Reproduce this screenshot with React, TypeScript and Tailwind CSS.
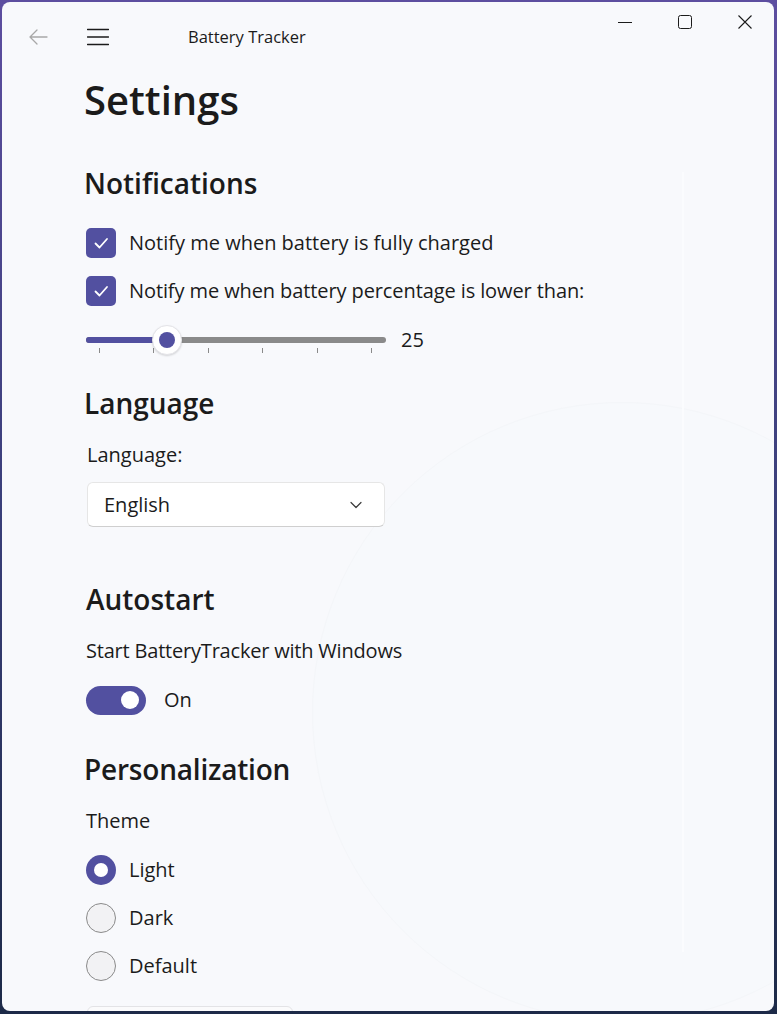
import React from 'react'

const accent = 'bg-[#5250a0]'

function Check() {
  return (
    <div className={`w-[30px] h-[30px] rounded-[5px] ${accent} flex items-center justify-center shrink-0`}>
      <svg width="30" height="30" viewBox="0 0 30 30" fill="none">
        <path d="M9.5 15.5 L13.5 19.5 L21 11" stroke="white" strokeWidth="1.8" strokeLinecap="round" strokeLinejoin="round" />
      </svg>
    </div>
  )
}

function Radio({ label, checked }: { label: string; checked?: boolean }) {
  return (
    <div className="flex items-center h-[30px] pl-[2px]">
      {checked ? (
        <div className={`w-[30px] h-[30px] rounded-full ${accent} flex items-center justify-center shrink-0`}>
          <div className="w-[14px] h-[14px] rounded-full bg-white" />
        </div>
      ) : (
        <div className="w-[30px] h-[30px] rounded-full bg-[#f2f2f4] border border-[#8a8a8a] shrink-0" />
      )}
      <span className="ml-[13px] text-[20px] text-[#1b1b1b]">{label}</span>
    </div>
  )
}

export default function App() {
  const ticks = [0, 1, 2, 3, 4, 5]
  return (
    <div
      className="w-[777px] h-[1014px] overflow-hidden bg-gradient-to-b from-[#5d4ea0] via-[#3a3f7a] to-[#1d2a48] pt-[2px] pl-[2px]"
      style={{ fontFamily: '"Segoe UI", "Open Sans", "Noto Sans", sans-serif' }}
    >
      <div className="relative w-[772px] h-[1009px] rounded-[8px] bg-[#f8f9fc] overflow-hidden text-[#1b1b1b]">
        {/* faint mica circle */}
        <div className="absolute left-[310px] top-[400px] w-[620px] h-[620px] rounded-full border border-[#f4f6f9] bg-[#f7f9fc]" />
        <div className="absolute left-[680px] top-[170px] w-[2px] h-[780px] bg-[#fbfcfe]" />

        <div className="relative">
          {/* title bar */}
          <div className="flex h-[70px]">
            <div className="flex items-center pl-[26px]">
              <svg width="20" height="20" viewBox="0 0 20 20" fill="none">
                <path d="M19 10 H2 M9 3 L2 10 L9 17" stroke="#a8a8a8" strokeWidth="1.3" strokeLinecap="round" strokeLinejoin="round" />
              </svg>
              <svg className="ml-[39px]" width="22" height="18" viewBox="0 0 22 18" fill="none">
                <path d="M0.5 1.5 H21.5 M0.5 9 H21.5 M0.5 16.5 H21.5" stroke="#1b1b1b" strokeWidth="1.5" strokeLinecap="round" />
              </svg>
              <span className="ml-[79px] text-[16.5px]">Battery Tracker</span>
            </div>
            <div className="flex-1" />
            <div className="flex items-center h-[40px] pr-[22px]">
              <svg width="14" height="14" viewBox="0 0 14 14" fill="none">
                <path d="M0 7.5 H14" stroke="#1b1b1b" strokeWidth="1" />
              </svg>
              <svg className="ml-[46px]" width="14" height="14" viewBox="0 0 14 14" fill="none">
                <rect x="0.5" y="0.5" width="13" height="13" rx="2" stroke="#1b1b1b" strokeWidth="1" />
              </svg>
              <svg className="ml-[46px]" width="14" height="14" viewBox="0 0 14 14" fill="none">
                <path d="M0.5 0.5 L13.5 13.5 M13.5 0.5 L0.5 13.5" stroke="#1b1b1b" strokeWidth="1.1" />
              </svg>
            </div>
          </div>

          {/* content */}
          <div className="pl-[82px] flex flex-col">
            <h1 className="h-[56px] leading-[56px] text-[40px] font-semibold">Settings</h1>

            <h2 className="mt-[35px] h-[40px] leading-[40px] text-[28px] font-semibold">Notifications</h2>
            <div className="mt-[25px] flex items-center h-[30px] pl-[2px]">
              <Check />
              <span className="ml-[13px] text-[20px]">Notify me when battery is fully charged</span>
            </div>
            <div className="mt-[18px] flex items-center h-[30px] pl-[2px]">
              <Check />
              <span className="ml-[13px] text-[20px] tracking-[-0.1px]">Notify me when battery percentage is lower than:</span>
            </div>
            <div className="mt-[19px] flex items-start h-[30px] pl-[2px]">
              <div className="relative w-[300px] h-[30px]">
                <div className="absolute left-0 right-0 top-[12px] h-[6px] rounded-full bg-[#8a8a8a]" />
                <div className="absolute left-0 w-[76px] top-[12px] h-[6px] rounded-full bg-[#5250a0]" />
                <div className="absolute left-[13px] right-[14px] top-[23px] flex justify-between">
                  {ticks.map((t) => (
                    <div key={t} className="w-px h-[5px] bg-[#8a8a8a]" />
                  ))}
                </div>
                <div className="absolute left-[66px] top-0 w-[30px] h-[30px] rounded-full bg-white border border-[#e4e4e8] shadow-[0_1px_2px_rgba(0,0,0,0.15)] flex items-center justify-center">
                  <div className="w-[16px] h-[16px] rounded-full bg-[#5250a0]" />
                </div>
              </div>
              <span className="ml-[15px] h-[30px] leading-[30px] text-[20px]">25</span>
            </div>

            <h2 className="mt-[28px] h-[40px] leading-[40px] text-[28px] font-semibold">Language</h2>
            <div className="mt-[18px] h-[28px] leading-[28px] pl-[3px] text-[20px]">Language:</div>
            <div className="mt-[13px] ml-[3px] w-[298px] h-[45px] rounded-[6px] bg-white border border-[#e6e6e6] border-b-[#cfcfcf] flex items-center pl-[16px] pr-[22px]">
              <span className="text-[20px] flex-1">English</span>
              <svg width="12" height="8" viewBox="0 0 12 8" fill="none">
                <path d="M1 1.5 L6 6.5 L11 1.5" stroke="#3a3a3a" strokeWidth="1.2" strokeLinecap="round" strokeLinejoin="round" />
              </svg>
            </div>

            <h2 className="mt-[52px] h-[40px] leading-[40px] text-[28px] font-semibold pl-[2px]">Autostart</h2>
            <div className="mt-[18px] h-[28px] leading-[28px] pl-[2px] text-[20px] tracking-[-0.2px]">Start BatteryTracker with Windows</div>
            <div className="mt-[20px] flex items-center h-[30px] pl-[2px]">
              <div className={`w-[60px] h-[29px] rounded-full ${accent} flex items-center justify-end pr-[7px]`}>
                <div className="w-[18px] h-[18px] rounded-full bg-white" />
              </div>
              <span className="ml-[18px] text-[20px]">On</span>
            </div>

            <h2 className="mt-[34px] h-[40px] leading-[40px] text-[28px] font-semibold tracking-[-0.2px]">Personalization</h2>
            <div className="mt-[18px] h-[28px] leading-[28px] pl-[2px] text-[20px]">Theme</div>
            <div className="mt-[20px]">
              <Radio label="Light" checked />
            </div>
            <div className="mt-[18px]">
              <Radio label="Dark" />
            </div>
            <div className="mt-[18px]">
              <Radio label="Default" />
            </div>
            <div className="mt-[25px] ml-[3px] w-[206px] h-[40px] rounded-[6px] bg-[#fbfbfc] border border-[#e3e3e6]" />
          </div>
        </div>
      </div>
    </div>
  )
}
